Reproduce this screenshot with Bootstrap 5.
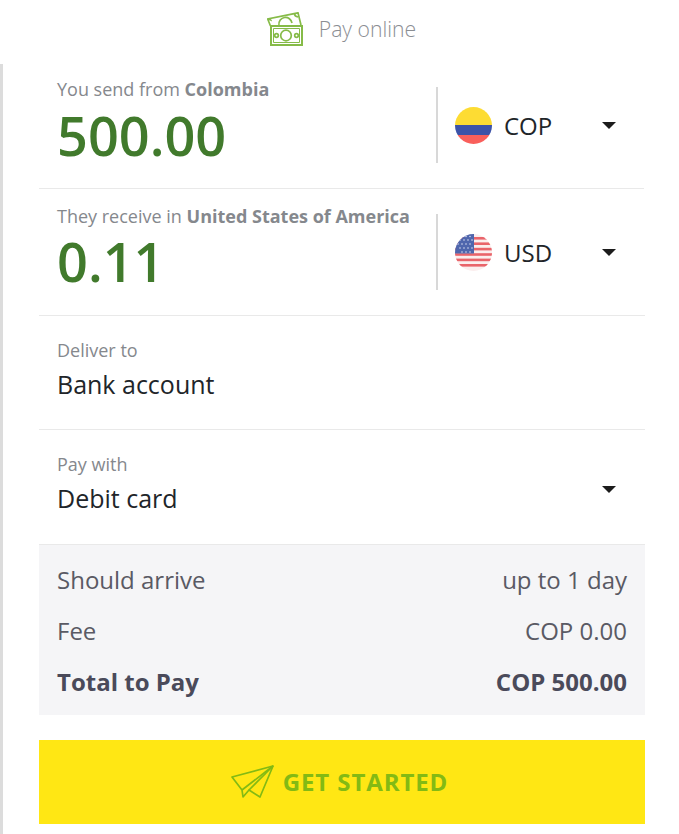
<!DOCTYPE html>
<html lang="en">
<head>
<meta charset="utf-8">
<title>Pay online</title>
<link rel="stylesheet" href="https://cdn.jsdelivr.net/npm/bootstrap@5.3.0/dist/css/bootstrap.min.css">
<style>
html,body{background:#fff;font-family:"Open Sans",sans-serif;overflow:hidden}
.top-head{height:64px;gap:16px;padding:0 0 6px 4px;color:#8b8e93;font-size:21.2px;font-weight:300}
.top-head svg{display:block}
.side-wrap{border-left:3px solid #dcdcdc;padding:0 34px 11px 36px;height:770px}
.amount-row{border-bottom:1px solid #e9e9e9;height:125px;margin-right:1px}
.amount-row.second{height:127px;margin-right:0}
.amount-left{flex:1 1 auto;padding:13px 0 0 18px;min-width:0}
.second .amount-left{padding-top:15px}
.lbl{font-size:18px;line-height:24px;color:#85888d;white-space:nowrap}
.lbl b{font-weight:700}
.amt{font-size:54px;line-height:60px;font-weight:600;color:#417a2c;margin-top:4px}
.second .amt{margin-top:3px}
.cur-box{width:208px;flex:none;margin-top:23px;height:76px;border-left:2px solid #d8d8d8;padding-left:17px;font-size:24px;color:#212529;padding-right:28px}
.second .cur-box{margin-top:25px;margin-right:1px}
.cur-box span.code{margin-left:12px;flex:1 1 auto;position:relative;top:1px}
.flagdot{display:block;width:37px;height:37px;flex:none}
.caret-dn{width:0;height:0;border-left:7px solid transparent;border-right:7px solid transparent;border-top:7px solid #1c1c1c;flex:none}
.plain-row{border-bottom:1px solid #e9e9e9;height:114px;padding:22px 29px 0 18px}
.plain-row.last{height:115px}
.plain-row.last .caret-dn{margin-top:34px}
.val{font-size:25px;line-height:32px;color:#212529;margin-top:6px}
.summary{background:#f5f5f7;height:170px;padding:9px 18px 0 18px;color:#5a5a64;font-size:24px}
.summary .sumrow{height:51px;line-height:51px}
.summary .tot{font-weight:700;color:#4a4a5a}
.go-btn{margin-top:25px;background:#ffe714;height:84px;color:#83ba14;font-weight:700;font-size:24px;letter-spacing:.9px;gap:9px;border-radius:0;border:0;width:100%;padding:0 6px 0 0}
.go-btn:hover{background:#ffe714;color:#83ba14}
</style>
</head>
<body>
<div class="top-head d-flex align-items-center justify-content-center">
<svg width="36" height="34" viewBox="0 0 36 34" fill="none" stroke="#86bb48" stroke-width="1.7">
<path d="M3.5 14 L0.7 7 L31 0.8 L34 13"/>
<path d="M12 13 A6.5 6.5 0 0 1 25 11"/>
<path d="M1 7 q3.5 1 3 2 M27.5 1.5 q0 3 3.5 3.5"/>
<rect x="4" y="14" width="31" height="19" stroke-width="2"/>
<path d="M6.5 16.5 H32.5 V30.5 H6.5 Z" stroke-width="1"/>
<circle cx="19" cy="23.5" r="5.3"/>
<circle cx="9.5" cy="23.5" r="1.8"/>
<circle cx="29.5" cy="23.5" r="1.8"/>
</svg>
<span>Pay online</span>
</div>
<div class="side-wrap">
<div class="amount-row d-flex">
<div class="amount-left">
<div class="lbl">You send from <b>Colombia</b></div>
<div class="amt">500.00</div>
</div>
<div class="cur-box d-flex align-items-center">
<svg class="flagdot" viewBox="0 0 37 37"><defs><clipPath id="c1"><circle cx="18.5" cy="18.5" r="18.5"/></clipPath></defs><g clip-path="url(#c1)"><rect width="37" height="18" fill="#fddc33"/><rect y="18" width="37" height="10" fill="#3c53a8"/><rect y="28" width="37" height="9" fill="#f95f5b"/></g></svg>
<span class="code">COP</span>
<i class="caret-dn"></i>
</div>
</div>
<div class="amount-row second d-flex">
<div class="amount-left">
<div class="lbl">They receive in <b>United States of America</b></div>
<div class="amt">0.11</div>
</div>
<div class="cur-box d-flex align-items-center">
<svg class="flagdot" viewBox="0 0 37 37"><defs><clipPath id="c2"><circle cx="18.5" cy="18.5" r="18.5"/></clipPath></defs><g clip-path="url(#c2)"><rect width="37" height="37" fill="#fbeeee"/><g fill="#e9646a"><rect y="3" width="37" height="2.6"/><rect y="8.4" width="37" height="2.6"/><rect y="13.8" width="37" height="2.6"/><rect y="19.2" width="37" height="2.6"/><rect y="24.6" width="37" height="2.6"/><rect y="30" width="37" height="2.6"/></g><rect width="19" height="19.5" fill="#4f66ad"/><g fill="#d5dbf0"><circle cx="5" cy="6" r=".8"/><circle cx="9" cy="6" r=".8"/><circle cx="13" cy="6" r=".8"/><circle cx="17" cy="6" r=".8"/><circle cx="3" cy="10" r=".8"/><circle cx="7" cy="10" r=".8"/><circle cx="11" cy="10" r=".8"/><circle cx="15" cy="10" r=".8"/><circle cx="5" cy="14" r=".8"/><circle cx="9" cy="14" r=".8"/><circle cx="13" cy="14" r=".8"/><circle cx="17" cy="14" r=".8"/><circle cx="7" cy="18" r=".8"/><circle cx="11" cy="18" r=".8"/><circle cx="15" cy="18" r=".8"/><circle cx="11" cy="2.5" r=".8"/><circle cx="15" cy="2.5" r=".8"/></g></g></svg>
<span class="code">USD</span>
<i class="caret-dn"></i>
</div>
</div>
<div class="plain-row">
<div class="lbl">Deliver to</div>
<div class="val">Bank account</div>
</div>
<div class="plain-row last d-flex justify-content-between align-items-start">
<div>
<div class="lbl">Pay with</div>
<div class="val">Debit card</div>
</div>
<i class="caret-dn"></i>
</div>
<div class="summary">
<div class="sumrow d-flex justify-content-between"><span>Should arrive</span><span>up to 1 day</span></div>
<div class="sumrow d-flex justify-content-between"><span>Fee</span><span>COP 0.00</span></div>
<div class="sumrow tot d-flex justify-content-between"><span>Total to Pay</span><span>COP 500.00</span></div>
</div>
<button class="btn go-btn d-flex align-items-center justify-content-center" type="button">
<svg width="44" height="34" viewBox="0 0 44 34" fill="none" stroke="#83ba14" stroke-width="1.7" stroke-linejoin="round"><path d="M43 1 L2 12 L12 25 L13 32 L19 25 L30 32 Z"/><path d="M43 1 L12 25"/><path d="M43 1 L19 25"/></svg>
<span>GET STARTED</span>
</button>
</div>
</body>
</html>
